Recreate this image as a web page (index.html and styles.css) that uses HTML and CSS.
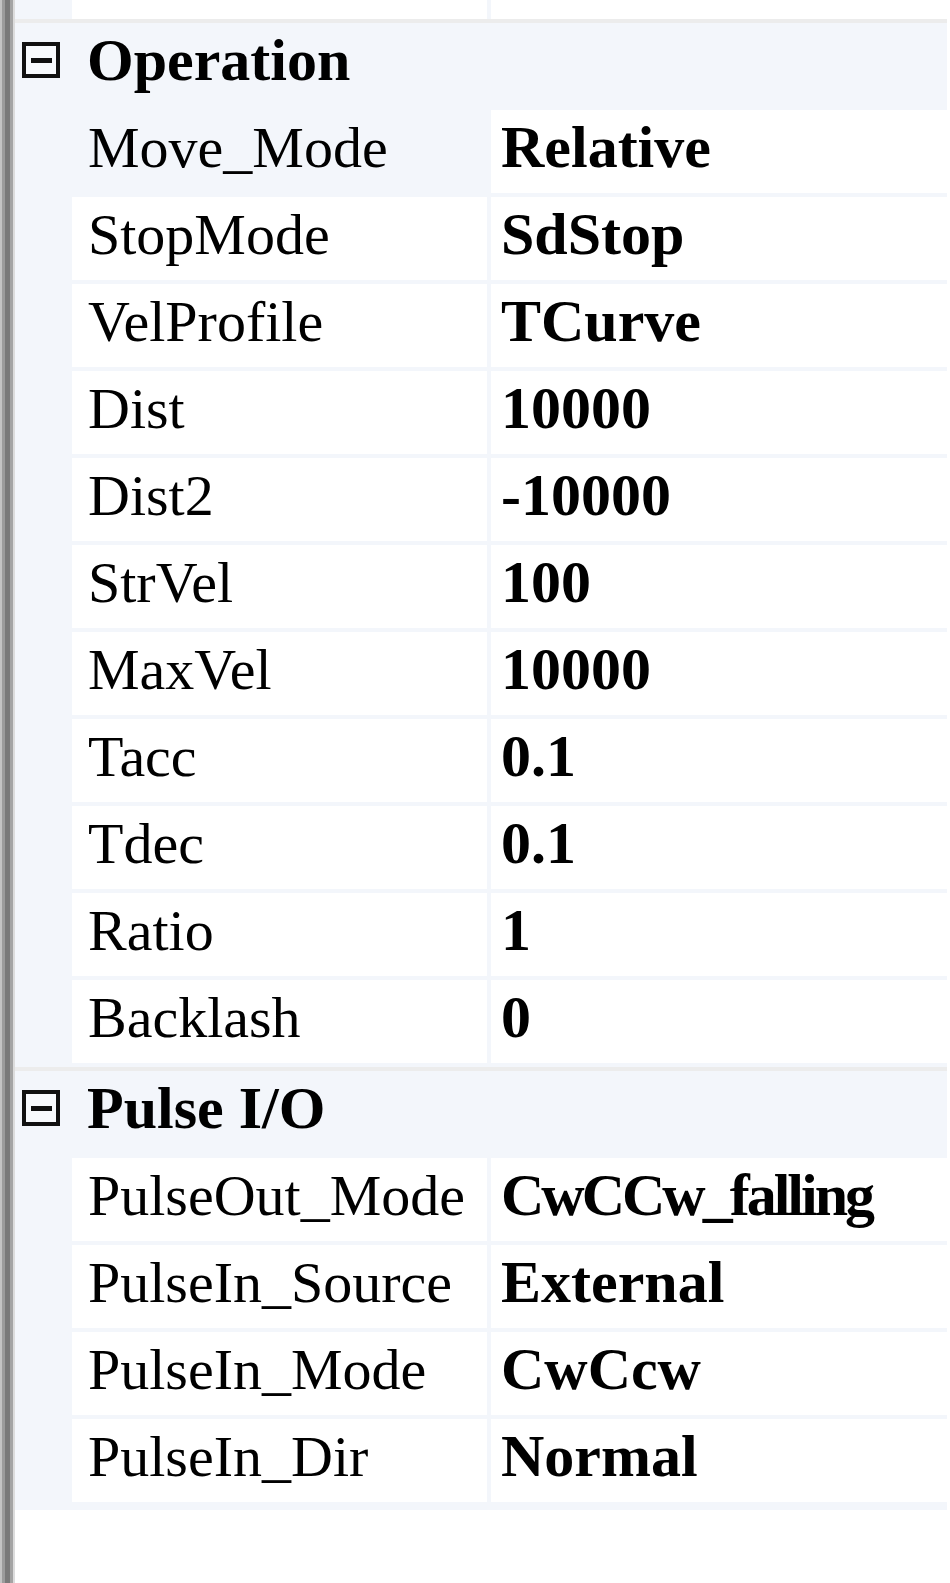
FILE: index.html
```html
<!DOCTYPE html>
<html>
<head>
<meta charset="utf-8">
<link rel="stylesheet" href="styles.css">
</head>
<body>
<div class="frame">
  <div class="edge"></div>
  <div class="panel">
    <div class="grid">
      <div class="row partial"><div class="margin"></div><div class="label"></div><div class="value"></div></div>

      <div class="cat">
        <div class="margin"><span class="toggle"><span class="minus"></span></span></div>
        <div class="cat-title">Operation</div>
      </div>
      <div class="row sel"><div class="margin"></div><div class="label">Move_Mode</div><div class="value">Relative</div></div>
      <div class="row"><div class="margin"></div><div class="label">StopMode</div><div class="value">SdStop</div></div>
      <div class="row"><div class="margin"></div><div class="label">VelProfile</div><div class="value">TCurve</div></div>
      <div class="row"><div class="margin"></div><div class="label">Dist</div><div class="value">10000</div></div>
      <div class="row"><div class="margin"></div><div class="label">Dist2</div><div class="value">-10000</div></div>
      <div class="row"><div class="margin"></div><div class="label">StrVel</div><div class="value">100</div></div>
      <div class="row"><div class="margin"></div><div class="label">MaxVel</div><div class="value">10000</div></div>
      <div class="row"><div class="margin"></div><div class="label">Tacc</div><div class="value">0.1</div></div>
      <div class="row"><div class="margin"></div><div class="label">Tdec</div><div class="value">0.1</div></div>
      <div class="row"><div class="margin"></div><div class="label">Ratio</div><div class="value">1</div></div>
      <div class="row"><div class="margin"></div><div class="label">Backlash</div><div class="value">0</div></div>

      <div class="cat">
        <div class="margin"><span class="toggle"><span class="minus"></span></span></div>
        <div class="cat-title">Pulse I/O</div>
      </div>
      <div class="row"><div class="margin"></div><div class="label">PulseOut_Mode</div><div class="value narrow">CwCCw_falling</div></div>
      <div class="row"><div class="margin"></div><div class="label">PulseIn_Source</div><div class="value">External</div></div>
      <div class="row"><div class="margin"></div><div class="label">PulseIn_Mode</div><div class="value">CwCcw</div></div>
      <div class="row"><div class="margin"></div><div class="label">PulseIn_Dir</div><div class="value">Normal</div></div>
    </div>
  </div>
</div>
</body>
</html>
```

FILE: styles.css
```css
html, body {
  margin: 0;
  padding: 0;
  background: #ffffff;
}

body {
  font-family: "Liberation Serif", "Times New Roman", serif;
  color: #000;
  overflow: hidden;
}

.frame {
  display: flex;
  min-height: 1583px;
}

.edge {
  width: 15px;
  flex: none;
  background: linear-gradient(to right,
    #c4c4c4 0, #c4c4c4 2px,
    #9c9c9c 2px, #9c9c9c 5px,
    #7a7a7a 5px, #7a7a7a 10px,
    #a4a4a4 10px, #a4a4a4 13px,
    #dcdcdc 13px, #dcdcdc 15px);
}

.panel {
  flex: 1;
  padding-right: 3px;
}

.grid {
  background: #f3f6fb;
  display: flex;
  flex-direction: column;
  padding-bottom: 4px;
}

.row {
  display: grid;
  grid-template-columns: 57px 411px 1fr;
  column-gap: 4px;
  margin-bottom: 4px;
}

.row .margin {
  margin-right: -4px;
}

.row .label,
.row .value {
  background: #ffffff;
  height: 75px;
  line-height: 75px;
  padding-bottom: 8px;
  white-space: nowrap;
  overflow: hidden;
}

.row .label {
  font-size: 58px;
  padding-left: 16px;
  margin-left: -4px;
}

.row .value {
  font-size: 60px;
  font-weight: bold;
  padding-left: 10px;
}

.row.sel .label {
  background: transparent;
}

.value.narrow {
  letter-spacing: -3px;
}

.row.partial {
  margin-bottom: 0;
}

.row.partial .label,
.row.partial .value {
  height: 19px;
  padding: 0;
}

.cat {
  display: flex;
  border-top: 4px solid #ececec;
  height: 83px;
  margin-bottom: 4px;
}

.cat .margin {
  width: 57px;
  flex: none;
  padding-left: 7px;
  padding-top: 19px;
  box-sizing: border-box;
}

.toggle {
  display: flex;
  align-items: center;
  justify-content: center;
  width: 38px;
  height: 36px;
  box-sizing: border-box;
  border: 4px solid #111;
  background: #f8fafd;
}

.minus {
  display: block;
  width: 21px;
  height: 5px;
  background: #111;
}

.cat-title {
  font-size: 60px;
  font-weight: bold;
  line-height: 75px;
  padding-left: 15px;
  white-space: nowrap;
}
```
